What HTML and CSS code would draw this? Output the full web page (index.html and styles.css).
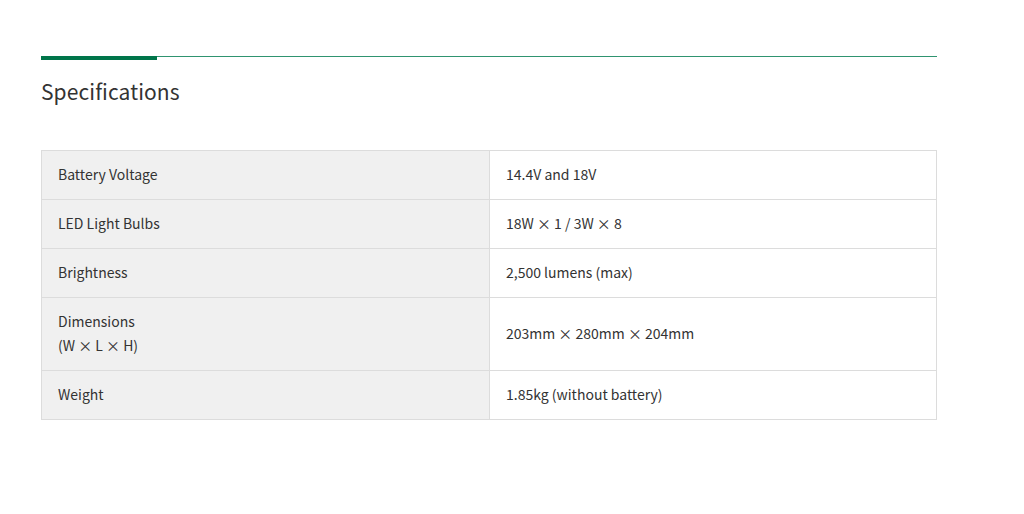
FILE: index.html
```html
<!DOCTYPE html>
<html lang="en">
<head>
<meta charset="utf-8">
<title>Specifications</title>
<link rel="stylesheet" href="styles.css">
</head>
<body>
<section class="specs">
  <div class="rule"><span class="rule-accent"></span></div>
  <h2 class="title">Specifications</h2>
  <table class="spec-table">
    <tr><th>Battery Voltage</th><td>14.4V and 18V</td></tr>
    <tr><th>LED Light Bulbs</th><td>18W × 1 / 3W × 8</td></tr>
    <tr><th>Brightness</th><td>2,500 lumens (max)</td></tr>
    <tr><th>Dimensions<br>(W × L × H)</th><td>203mm × 280mm × 204mm</td></tr>
    <tr><th>Weight</th><td>1.85kg (without battery)</td></tr>
  </table>
</section>
</body>
</html>
```

FILE: styles.css
```css
html, body {
  margin: 0;
  padding: 0;
  background: #fff;
}
body {
  font-family: "Noto Sans CJK JP", "Lato", "Liberation Sans", sans-serif;
  color: #333;
}
.specs {
  width: 896px;
  margin-left: 41px;
  padding-top: 56px;
}
.rule {
  height: 1px;
  background: #2f9470;
  position: relative;
}
.rule-accent {
  position: absolute;
  left: 0;
  top: 0;
  width: 116px;
  height: 4px;
  background: #00754a;
}
.title {
  margin: 20px 0 0;
  font-size: 21px;
  font-weight: 400;
  line-height: 28px;
  color: #333;
  letter-spacing: 0.1px;
}
.spec-table {
  margin-top: 45px;
  width: 100%;
  border-collapse: collapse;
  font-size: 14px;
  line-height: 24px;
}
.spec-table th,
.spec-table td {
  border: 1px solid #dcdcdc;
  padding: 11px 16px 13px;
  text-align: left;
  font-weight: 400;
  vertical-align: middle;
}
.spec-table th {
  width: 415px;
  background: #f0f0f0;
}
.spec-table td {
  background: #fff;
}
```
